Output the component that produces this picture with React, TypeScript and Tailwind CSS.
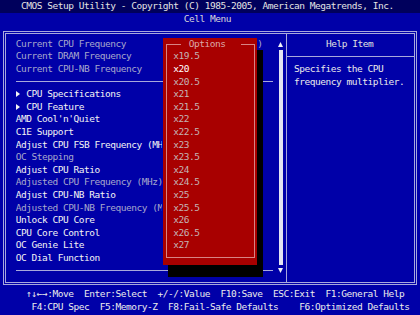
import React from "react";

const ROW = "h-[12.6px] leading-[12.6px]";
const DIS = "text-[#a8a8cc]";
const EN = "text-[#f4f4f4]";

function Tri({ up }: { up: boolean }) {
  return (
    <svg width="5" height="5" viewBox="0 0 5 5" className="block">
      {up ? <polygon points="2.5,0 5,5 0,5" fill="#f0f0f8" /> : <polygon points="0,0 5,0 2.5,5" fill="#f0f0f8" />}
    </svg>
  );
}

function Arrow() {
  return (
    <span className="inline-flex w-[5.25px] h-[12.6px] items-center justify-start align-top">
      <svg width="4" height="6" viewBox="0 0 4 6" className="block">
        <polygon points="0,0 4,3 0,6" fill="#f4f4f4" />
      </svg>
    </span>
  );
}

function Sep({ mr }: { mr: string }) {
  return (
    <div className={`${ROW} flex items-center ${mr}`}>
      <div className="h-px w-full bg-[#a8a8dc]" />
    </div>
  );
}

const options = ["x19.5", "x20", "x20.5", "x21", "x21.5", "x22", "x22.5", "x23", "x23.5", "x24", "x24.5", "x25", "x25.5", "x26", "x26.5", "x27"];

export default function App() {
  return (
    <div className="w-[420px] h-[315px] bg-[#0000a8] overflow-hidden font-['DejaVu_Sans_Mono',monospace] text-[9.5px] tracking-[-0.47px] whitespace-pre">
      <div className={`${ROW} bg-[#00005c] text-[#e4e4e4] pl-[21px]`}>
        {"CMOS Setup Utility - Copyright (C) 1985-2005, American Megatrends, Inc."}
      </div>
      <div className={`${ROW} text-[#d8d8d8] pl-[183.75px]`}>Cell Menu</div>

      <div className="relative mt-[5.8px] ml-[3px] w-[414px] h-[254px] border-[3px] border-double border-[#a8a8dc] flex">
        {/* left pane */}
        <div className="w-[280px] flex pt-[3.8px]">
          <div className="w-[272.25px] pl-[9.75px] flex flex-col">
            <div className={`${ROW} ${DIS} flex`}>
              <span>Current CPU Frequency</span>
              <span className="ml-[131.25px]">)</span>
            </div>
            <div className={`${ROW} ${DIS}`}>Current DRAM Frequency</div>
            <div className={`${ROW} ${DIS}`}>Current CPU-NB Frequency</div>
            <Sep mr="mr-[5.25px]" />
            <div className={`${ROW} ${EN}`}><Arrow />{" CPU Specifications"}</div>
            <div className={`${ROW} ${EN}`}><Arrow />{" CPU Feature"}</div>
            <div className={`${ROW} ${EN}`}>AMD Cool'n'Quiet</div>
            <div className={`${ROW} ${EN}`}>C1E Support</div>
            <div className={`${ROW} ${EN} w-[146px] overflow-hidden`}>Adjust CPU FSB Frequency (MHz)</div>
            <div className={`${ROW} ${DIS}`}>OC Stepping</div>
            <div className={`${ROW} ${EN}`}>Adjust CPU Ratio</div>
            <div className={`${ROW} ${DIS}`}>Adjusted CPU Frequency (MHz)</div>
            <div className={`${ROW} ${EN}`}>Adjust CPU-NB Ratio</div>
            <div className={`${ROW} ${DIS} w-[146px] overflow-hidden`}>Adjusted CPU-NB Frequency (MHz)</div>
            <div className={`${ROW} ${EN}`}>Unlock CPU Core</div>
            <div className={`${ROW} ${EN}`}>CPU Core Control</div>
            <div className={`${ROW} ${EN}`}>OC Genie Lite</div>
            <div className={`${ROW} ${EN}`}>OC Dial Function</div>
            <Sep mr="mr-[5.25px]" />
          </div>
          {/* scrollbar */}
          <div className="w-[5.25px] flex flex-col items-center">
            <div className={`${ROW} flex items-center`}><Tri up /></div>
            <div className="h-[214.2px] w-[4.5px] bg-[#e4e4f2]" />
            <div className={`${ROW} flex items-center`}><Tri up={false} /></div>
          </div>
        </div>
        <div className="w-px bg-[#a8a8dc]" />
        {/* help pane */}
        <div className="flex-1 flex flex-col pt-[3.8px] text-[#ececec]">
          <div className={`${ROW} pl-[39px] text-[#e0e0e0]`}>Help Item</div>
          <Sep mr="" />
          <div className={`${ROW} pl-[7px]`}>Specifies the CPU</div>
          <div className={`${ROW} pl-[7px]`}>frequency multiplier.</div>
        </div>

        {/* popup shadow */}
        <div className="absolute left-[162px] top-[16.4px] w-[94.5px] h-[226.8px] bg-black" />
        {/* popup */}
        <div className="absolute left-[156.75px] top-[3.8px] w-[94.5px] h-[226.8px] bg-[#a80000]">
          <div className="absolute left-[3px] right-[2px] top-[6.3px] bottom-[6.3px] border-x border-b border-[#d88484]" />
          <div className={`${ROW} flex items-center pl-[3px] pr-[2px]`}>
            <div className="w-[15px] h-px bg-[#d88484]" />
            <div className="w-[8px]" />
            <span className="text-[#dcaaaa]">Options</span>
            <div className="flex-1" />
            <div className="w-[14.5px] h-px bg-[#d88484]" />
          </div>
          <div className="flex flex-col pl-[10.5px]">
            {options.map((o) => (
              <div key={o} className={`${ROW} ${o === "x20" ? "text-white" : "text-[#c4b4b4]"}`}>{o}</div>
            ))}
          </div>
        </div>
      </div>

      <div className="mt-[3px] text-[#ececec]">
        <div className={`${ROW} pl-[26.25px]`}>{"↑↓←→:Move  Enter:Select  +/-/:Value  F10:Save  ESC:Exit  F1:General Help"}</div>
        <div className={`${ROW} pl-[31.5px]`}>{"F4:CPU Spec  F5:Memory-Z  F8:Fail-Safe Defaults    F6:Optimized Defaults"}</div>
      </div>
    </div>
  );
}
